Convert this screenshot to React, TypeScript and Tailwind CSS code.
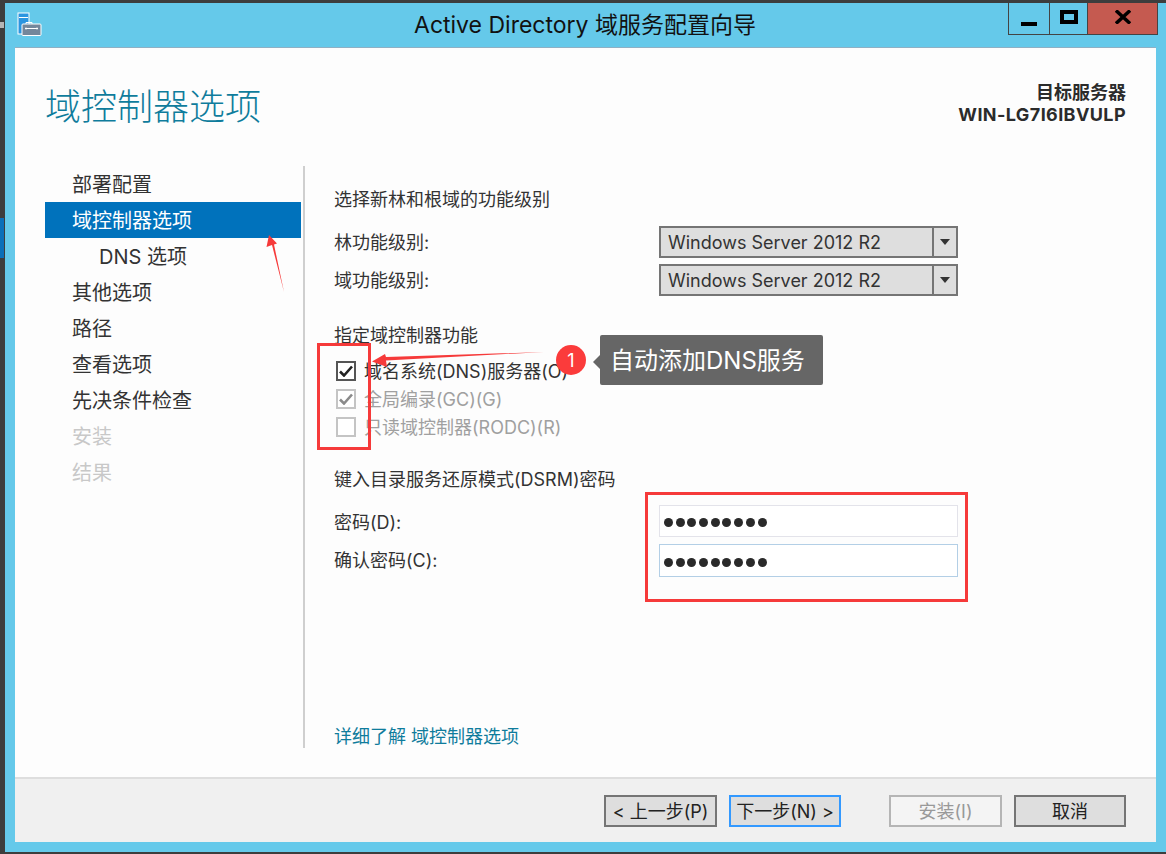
const font = "font-['Inter','Noto_Sans_CJK_SC',sans-serif]"

const steps = [
  { label: '部署配置' },
  { label: '域控制器选项', active: true },
  { label: 'DNS 选项', sub: true },
  { label: '其他选项' },
  { label: '路径' },
  { label: '查看选项' },
  { label: '先决条件检查' },
  { label: '安装', disabled: true },
  { label: '结果', disabled: true },
]

function ServerIcon() {
  return (
    <svg width="25" height="25" viewBox="0 0 25 25">
      <rect x="1" y="1" width="11" height="21" fill="#2b95e0" stroke="#fff" />
      <rect x="2" y="5" width="9" height="1" fill="#fff" />
      <path d="M9 12V10.5H15V12" fill="none" stroke="#fff" />
      <rect x="5" y="12" width="19" height="11.5" rx="1" fill="#74879b" stroke="#fff" />
      <path d="M8 16.5H21M9 15.5V17.5M20 15.5V17.5" stroke="#fff" />
    </svg>
  )
}

function Select() {
  return (
    <div className="flex w-[299px] h-8 bg-[#dedede] border-2 border-[#757575]">
      <div className="flex-1 pl-[7px] leading-[30px] text-[#333]">Windows Server 2012 R2</div>
      <div className="flex items-center justify-center w-6 border-l-2 border-[#757575]">
        <svg width="10" height="6" viewBox="0 0 10 6">
          <path d="M0 0H10L5 6Z" fill="#333" />
        </svg>
      </div>
    </div>
  )
}

function Check({ checked, disabled, label }: { checked?: boolean; disabled?: boolean; label: string }) {
  return (
    <div className={`flex items-center h-7 ${disabled ? 'text-[#a0a0a0]' : 'text-[#333]'}`}>
      <div
        className={`flex items-center justify-center w-5 h-5 ml-[2px] mr-2 border-2 bg-white ${
          disabled ? 'border-[#c4c4c4]' : 'border-[#555]'
        }`}
      >
        {checked && (
          <svg width="14" height="12" viewBox="0 0 14 12">
            <path d="M1 6.5L5 10.5L13 1.5" fill="none" stroke={disabled ? '#8a8a8a' : '#222'} strokeWidth="2.6" />
          </svg>
        )}
      </div>
      <span>{label}</span>
    </div>
  )
}

function Password({ focused }: { focused?: boolean }) {
  return (
    <div
      className={`flex items-center gap-[2.7px] w-[299px] pl-[4px] pt-[3px] bg-white border ${
        focused ? 'h-[33px] border-[#b3cfe6]' : 'h-8 border-[#e3e3ea]'
      }`}
    >
      {[1, 2, 3, 4, 5, 6, 7, 8, 9].map((n) => (
        <span key={n} className="w-[9px] h-[9px] rounded-full bg-[#2a2a2a]" />
      ))}
    </div>
  )
}

function Button({ label, variant, width }: { label: string; variant?: 'focus' | 'disabled'; width: string }) {
  const look =
    variant === 'focus'
      ? 'bg-[#dedede] border-[#3399ff] text-[#222]'
      : variant === 'disabled'
        ? 'bg-[#f4f4f4] border-[#b5b5b5] text-[#999]'
        : 'bg-[#dedede] border-[#757575] text-[#222]'
  return (
    <div className={`flex items-center justify-center h-8 shrink-0 border-2 whitespace-pre ${width} ${look}`}>
      {label}
    </div>
  )
}

export default function App() {
  return (
    <div className={`relative flex flex-col w-[1166px] h-[854px] overflow-hidden bg-[#3d3d3d] text-[18px] ${font}`}>
      <div className="h-[3px] shrink-0" />
      <div className="flex flex-1 min-h-0">
        {/* desktop behind the window */}
        <div className="w-[5px] pt-[19px]">
          <div className="w-1 h-[6px] bg-[#b5b5b5]" />
          <div className="w-1 h-10 mt-[190px] bg-[#0b6fb8]" />
        </div>

        <div className="flex flex-col flex-1 bg-[#65c9ea] pb-[10px]">
          {/* Title bar */}
          <div className="relative flex items-start justify-center h-11 shrink-0">
            <div className="absolute left-3 top-[9px]">
              <ServerIcon />
            </div>
            <div className="mr-[1px] text-[23px] leading-[45px] text-[#111]">Active Directory 域服务配置向导</div>
            <div className="absolute top-0 right-[8px] flex h-8 border border-t-0 border-[#444]">
              <div className="flex items-end justify-center w-[41px] pb-2 border-r border-[#444]">
                <div className="w-4 h-1 bg-black" />
              </div>
              <div className="flex items-center justify-center w-[38px] border-r border-[#444]">
                <div className="w-[18px] h-[14px] mb-1 border-[4px] border-black" />
              </div>
              <div className="flex items-center justify-center w-[69px] bg-[#c55a50]">
                <svg width="16" height="14" viewBox="0 0 16 14" className="mb-1">
                  <path d="M1 0.5L15 13.5M15 0.5L1 13.5" stroke="#000" strokeWidth="3.4" />
                </svg>
              </div>
            </div>
          </div>

          <div className="flex flex-col flex-1 min-h-0 ml-[10px] mr-[10px] bg-[#fdfdfd] border-t border-[#8fb0c4]">
            {/* Header */}
            <div className="flex justify-between h-[118px] shrink-0 pl-[30px] pr-[30px]">
              <div className="pt-[33px] text-[36px] leading-[52px] font-light text-[#0f7c9c]">域控制器选项</div>
              <div className="pt-[34px] text-right text-[18px] leading-[22px] font-bold text-[#2b2b2b]">
                <div>目标服务器</div>
                <div className="tracking-[0.4px]">WIN-LG7I6IBVULP</div>
              </div>
            </div>

            {/* Main */}
            <div className="flex flex-1 min-h-0">
              <div className="w-[256px] ml-[30px] shrink-0 text-[20px]">
                {steps.map((step) => (
                  <div
                    key={step.label}
                    className={`h-9 leading-[38px] ${step.sub ? 'pl-[54px]' : 'pl-[27px]'} ${
                      step.active
                        ? 'bg-[#0072bc] text-white'
                        : step.disabled
                          ? 'text-[#c8c8c8]'
                          : 'text-[#333]'
                    }`}
                  >
                    {step.label}
                  </div>
                ))}
              </div>
              <div className="w-[2px] h-[582px] ml-[2px] bg-[#cfcfcf] shrink-0" />
              <div className="flex flex-col flex-1 h-[582px] pl-[29px] text-[#333]">
                <div className="h-7 mt-[19px] leading-[30px]">选择新林和根域的功能级别</div>
                <div className="flex items-center mt-[13px] h-8">
                  <div className="w-[325px]">林功能级别:</div>
                  <Select />
                </div>
                <div className="flex items-center mt-[6px] h-8">
                  <div className="w-[325px]">域功能级别:</div>
                  <Select />
                </div>
                <div className="h-7 mt-[25px] leading-[30px]">指定域控制器功能</div>
                <div className="mt-[8px]">
                  <Check checked label="域名系统(DNS)服务器(O)" />
                  <Check checked disabled label="全局编录(GC)(G)" />
                  <Check disabled label="只读域控制器(RODC)(R)" />
                </div>
                <div className="h-7 mt-6 leading-[30px]">键入目录服务还原模式(DSRM)密码</div>
                <div className="flex items-center mt-3 h-8">
                  <div className="w-[325px] pt-[2px]">密码(D):</div>
                  <Password />
                </div>
                <div className="flex items-center mt-[7px] h-[33px]">
                  <div className="w-[325px]">确认密码(C):</div>
                  <Password focused />
                </div>
                <div className="mt-auto h-7 leading-[30px] mb-[-2px] text-[#0f7c9c]">详细了解 域控制器选项</div>
              </div>
            </div>

            {/* Footer */}
            <div className="flex items-start h-[65px] shrink-0 pt-[16px] pl-[589px] bg-[#f0f0f0] border-t-2 border-[#dedede]">
              <div className="flex gap-3">
                <Button label="< 上一步(P)" width="w-[113px]" />
                <Button label="下一步(N) >" variant="focus" width="w-[112px]" />
              </div>
              <div className="flex gap-3 ml-[48px]">
                <Button label="安装(I)" variant="disabled" width="w-[113px]" />
                <Button label="取消" width="w-[112px]" />
              </div>
            </div>
          </div>
        </div>
      </div>
      <div className="h-[2px] shrink-0" />

      {/* Annotations drawn over the screenshot */}
      <div className="absolute left-[317px] top-[343px] w-[54px] h-[107px] border-[3px] border-[#f63a3a]" />
      <div className="absolute left-[645px] top-[492px] w-[323px] h-[110px] border-[3px] border-[#f63a3a]" />
      <svg className="absolute left-0 top-0 pointer-events-none" width="1166" height="854">
        <path d="M544 352L386 360.5L387 367L372 361.5L385 354L386 357Z" fill="#f63a3a" />
        <path d="M284 292L272 245L266.5 247L269 235L277 243.5L274 244.5Z" fill="#f63a3a" />
      </svg>
      <div className="absolute left-[556px] top-[345px] flex items-center justify-center w-[30px] h-[30px] rounded-full bg-[#fb3b3b] text-white text-[18px]">
        1
      </div>
      <div className="absolute left-[600px] top-[335px] flex items-center w-[223px] h-[50px] pl-[10px] pt-[2px] rounded-[2px] bg-[#666] text-white text-[24px]">
        <div className="absolute left-[-7px] top-[20px] w-0 h-0 border-y-[7px] border-r-[7px] border-y-transparent border-r-[#666]" />
        自动添加DNS服务
      </div>
    </div>
  )
}
